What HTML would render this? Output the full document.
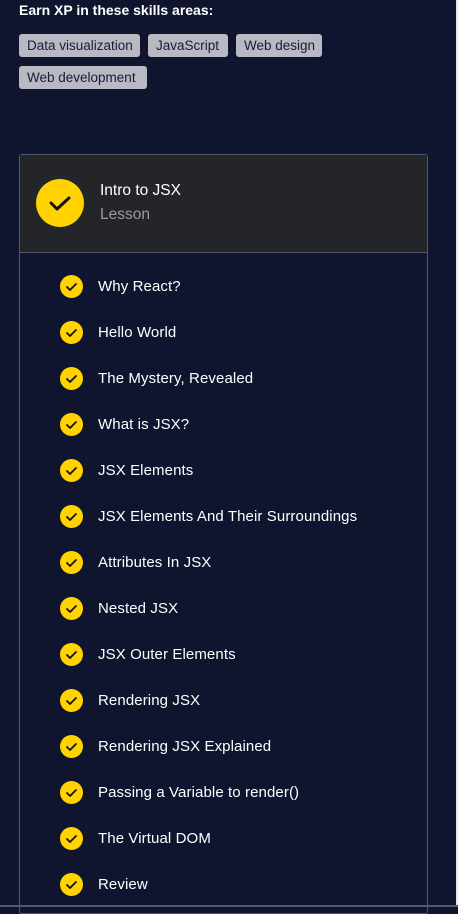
<!DOCTYPE html>
<html><head><style>
body{margin:0;width:458px;height:907px;background:#10152f;font-family:"Liberation Sans",sans-serif;color:#fff;position:relative;overflow:hidden}
.h{position:absolute;left:19px;top:2px;font-size:14px;font-weight:bold}
.tag{position:absolute;height:23px;line-height:23px;background:#b8b9c2;color:#1a1d2e;font-size:13.5px;border-radius:3px;padding:0 8px;box-sizing:border-box;white-space:nowrap}
.card{position:absolute;left:19px;top:154px;width:409px;height:760px;border:1px solid #55586a;border-radius:3px;box-sizing:border-box}
.head{position:absolute;left:0;top:0;right:0;height:97px;background:#242528;border-bottom:1px solid #55586a}
.big{position:absolute;left:16px;top:24px;width:48px;height:48px;border-radius:50%;background:#ffd300}
.item{position:absolute;left:40px;height:24px}
.c{position:absolute;left:0;top:0;width:23px;height:23px;border-radius:50%;background:#ffd300}
.t{position:absolute;left:38px;top:3px;font-size:15px;white-space:nowrap;letter-spacing:0.1px}
.right{position:absolute;right:0;top:0;width:2px;height:907px;background:#e8e8ec}
.bot{position:absolute;left:0;bottom:0;width:458px;height:2px;background:#55586a}
</style></head><body>
<div class="h">Earn XP in these skills areas:</div>
<div class="tag" style="left:19px;top:34px;width:121px">Data visualization</div>
<div class="tag" style="left:148px;top:34px;width:80px">JavaScript</div>
<div class="tag" style="left:236px;top:34px;width:86px">Web design</div>
<div class="tag" style="left:19px;top:66px;width:128px">Web development</div>
<div class="card">
<div class="head">
<div class="big"><svg width="48" height="48"><path d="M15 24 L21 30 L33 19" stroke="#111" stroke-width="3" fill="none" stroke-linecap="round" stroke-linejoin="round"/></svg></div>
<div style="position:absolute;left:80px;top:27px;font-size:15.5px">Intro to JSX</div>
<div style="position:absolute;left:80px;top:51px;font-size:15.5px;color:#9a9a9e">Lesson</div>
</div>
</div>
<div id="list"></div>
<script>
var n=["Why React?","Hello World","The Mystery, Revealed","What is JSX?","JSX Elements","JSX Elements And Their Surroundings","Attributes In JSX","Nested JSX","JSX Outer Elements","Rendering JSX","Rendering JSX Explained","Passing a Variable to render()","The Virtual DOM","Review"];
var h="";n.forEach(function(s,i){h+='<div class="item" style="left:60px;top:'+(275+46*i)+'px"><div class="c"><svg width="23" height="23"><path d="M7 12 L10 15 L16 9" stroke="#111" stroke-width="1.8" fill="none" stroke-linecap="round" stroke-linejoin="round"/></svg></div><div class="t">'+s+'</div></div>'});
document.getElementById("list").innerHTML=h;
</script>
<div class="right"></div>
<div class="bot"></div>
</body></html>
